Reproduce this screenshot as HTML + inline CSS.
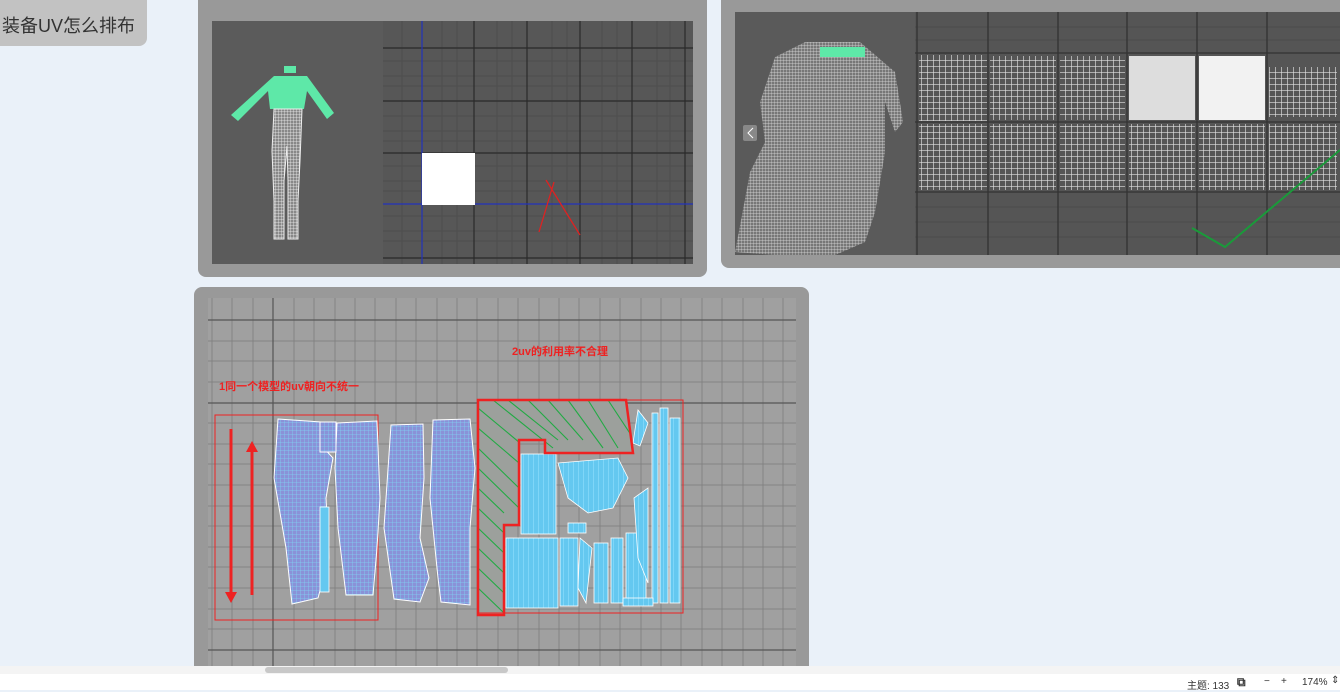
<!DOCTYPE html>
<html><head><meta charset="utf-8"><style>
*{margin:0;padding:0;box-sizing:border-box}
body{width:1340px;height:690px;overflow:hidden;background:#eaf1f9;position:relative;font-family:"Liberation Sans","Noto Sans CJK SC",sans-serif}
.abs{position:absolute}
</style></head><body>
<div class="abs" style="left:-10px;top:-10px;width:157px;height:56px;background:#c2c2c2;border-radius:8px;"></div>
<div class="abs" style="left:2px;top:12px;font-size:18px;color:#333">装备UV怎么排布</div>

<!-- panel 1 -->
<div class="abs" style="left:198px;top:-10px;width:509px;height:287px;background:#999;border-radius:8px"></div>
<svg class="abs" style="left:212px;top:21px" width="481" height="243">
<defs><pattern id="wf" width="3" height="3" patternUnits="userSpaceOnUse"><rect width="3" height="3" fill="#888"/><path d="M0 0H3M0 0V3" stroke="#eee" stroke-width="0.8"/></pattern></defs>
<rect width="481" height="243" fill="#5b5b5b"/>
<rect x="171" width="310" height="243" fill="#575757"/>
<g stroke="#4e4e4e" stroke-width="1">
<path d="M171 40H481M171 55H481M171 65H481M171 95H481M171 110H481M171 120H481M171 145H481M171 160H481M171 170H481M171 195H481M171 210H481M171 220H481M190 0V243M230 0V243M245 0V243M285 0V243M300 0V243M340 0V243M355 0V243M390 0V243M405 0V243M445 0V243M458 0V243"/>
</g>
<g stroke="#2a2a2a" stroke-width="1.2">
<path d="M171 27H481M171 80H481M171 132H481M171 237H481M262 0V243M315 0V243M368 0V243M420 0V243M473 0V243"/>
</g>
<path d="M210 0V243M171 183H481" stroke="#2233bb" stroke-width="1.2"/>
<rect x="210" y="132" width="53" height="52" fill="#fff"/>
<path d="M334 159L368 214M342 161L327 211" stroke="#d22" stroke-width="1.3"/>
<rect x="72" y="45" width="12" height="7" fill="#5ee8a8"/>
<path d="M62 55L95 55L122 92L115 98L95 70L92 88L58 88L56 70L26 100L19 94Z" fill="#5ee8a8"/>
<path d="M62 88H90L88 140L86 180L86 218H76L76 160L75 125L72 160L72 218H62L62 180L60 130Z" fill="url(#wf)" stroke="#eee" stroke-width="1"/>
</svg>

<!-- panel 2 -->
<div class="abs" style="left:721px;top:-10px;width:630px;height:278px;background:#999;border-radius:8px"></div>
<svg class="abs" style="left:735px;top:12px" width="605" height="243">
<defs>
<pattern id="wf2" width="3" height="3" patternUnits="userSpaceOnUse"><rect width="3" height="3" fill="#777"/><path d="M0 0H3M0 0V3" stroke="#ddd" stroke-width="0.7"/></pattern>
<pattern id="tl" width="6" height="6" patternUnits="userSpaceOnUse"><rect width="6" height="6" fill="#555"/><path d="M0 0H6M0 0V6" stroke="#e8e8e8" stroke-width="1.3"/></pattern>
</defs>
<rect width="605" height="243" fill="#5a5a5a"/>
<rect x="180" width="425" height="243" fill="#555"/>
<g stroke="#4a4a4a"><path d="M180 15H605M180 28H605M180 195H605M180 210H605M180 225H605"/></g>
<g stroke="#333" stroke-width="1.3"><path d="M180 41H605M180 110H605M180 180H605M182 0V243M253 0V243M323 0V243M392 0V243M462 0V243M532 0V243"/></g>
<path d="M40 45L70 30L125 30L160 60L168 110L160 120L150 90L150 140L140 200L130 230L100 243L40 243L0 240L15 160L30 130L25 90Z" fill="url(#wf2)"/>
<rect x="85" y="35" width="45" height="10" fill="#5ee8a8"/>
<rect x="8" y="113" width="14" height="16" rx="2" fill="#888"/>
<path d="M18 116L13 121L18 126" stroke="#fff" fill="none"/>
<g fill="url(#tl)" opacity="0.95">
<rect x="184" y="43" width="68" height="66"/><rect x="184" y="112" width="68" height="66"/><rect x="255" y="44" width="66" height="64"/><rect x="325" y="44" width="65" height="64"/><rect x="255" y="112" width="66" height="66"/><rect x="325" y="112" width="65" height="66"/><rect x="394" y="112" width="66" height="66"/><rect x="464" y="112" width="66" height="66"/><rect x="534" y="112" width="68" height="66"/><rect x="534" y="55" width="68" height="50"/>
</g>
<rect x="394" y="44" width="66" height="64" fill="#ddd"/>
<rect x="464" y="44" width="66" height="64" fill="#f2f2f2"/>
<path d="M457 216L490 235L605 138" stroke="#1a9a3a" stroke-width="2" fill="none"/>
</svg>

<!-- panel 3 -->
<div class="abs" style="left:194px;top:287px;width:615px;height:400px;background:#999;border-radius:8px"></div>
<svg class="abs" style="left:208px;top:298px" width="588" height="368">
<defs>
<pattern id="uv" width="4" height="4" patternUnits="userSpaceOnUse"><rect width="4" height="4" fill="#8a92d8"/><path d="M0 0H4M0 0V4" stroke="#7fd3f2" stroke-width="0.8"/></pattern>
<pattern id="cy" width="5" height="5" patternUnits="userSpaceOnUse"><rect width="5" height="5" fill="#64c8f0"/><path d="M0 0V5" stroke="#9ae4ff" stroke-width="1"/></pattern>
<clipPath id="gc"><path d="M270 102L418 102L425 155L337 155L337 142L311 142L311 227L296 227L296 317L270 317Z"/></clipPath>
</defs>
<rect width="588" height="368" fill="#a0a0a0"/>
<g stroke="#838383"><path d="M0 43H588M0 63H588M0 84H588M0 125H588M0 146H588M0 166H588M0 187H588M0 208H588M0 228H588M0 249H588M0 269H588M0 290H588M0 311H588M0 331H588M4 0V368M24 0V368M45 0V368M86 0V368M106 0V368M127 0V368M147 0V368M167 0V368M188 0V368M208 0V368M229 0V368M249 0V368M269 0V368M290 0V368M310 0V368M331 0V368M351 0V368M371 0V368M392 0V368M412 0V368M433 0V368M453 0V368M473 0V368M494 0V368M514 0V368M535 0V368M555 0V368M575 0V368"/></g>
<path d="M0 22H588M0 105H588M0 352H588M65 0V368" stroke="#555" stroke-width="1.2"/>
<rect x="7" y="117" width="163" height="205" fill="none" stroke="#e22"/>
<path d="M23 131V297M44 152V297" stroke="#e22" stroke-width="3"/>
<path d="M17 294L23 305L29 294ZM38 154L44 143L50 154Z" fill="#e22"/>
<g fill="url(#uv)" stroke="#fff"><path d="M70 121L113 124L112 146L125 160L118 200L121 260L110 300L84 306L78 250L66 180Z"/><path d="M129 125L169 123L172 200L169 250L165 297L138 297L130 230L127 170Z"/><path d="M183 127L215 126L216 180L212 240L221 280L212 304L186 301L176 230Z"/><path d="M225 122L262 121L267 170L262 230L262 307L233 304L230 280L222 200Z"/><rect x="112" y="124" width="16" height="30"/></g>
<rect x="112" y="209" width="9" height="85" fill="#64c8f0" stroke="#fff" stroke-width="0.8"/>
<g clip-path="url(#gc)"><rect x="270" y="102" width="160" height="215" fill="#9ca09c"/><g stroke="#22aa44" stroke-width="1.1"><path d="M270 110L330 160M270 130L311 165M270 150L311 190M270 170L311 210M270 190L296 215M270 210L296 235M270 230L296 255M270 250L296 275M270 270L296 295M270 290L296 315M285 102L345 150M300 102L350 142M320 102L360 142M340 102L375 142M360 102L395 150M380 102L410 150M400 102L425 140"/></g></g>
<g fill="url(#cy)" stroke="#fff" stroke-width="0.8">
<rect x="313" y="156" width="35" height="80"/><rect x="298" y="240" width="52" height="70"/><rect x="352" y="240" width="18" height="68"/>
<path d="M372 240L384 250L378 305L370 290Z"/><rect x="386" y="245" width="14" height="60"/><rect x="403" y="240" width="12" height="65"/><rect x="418" y="235" width="20" height="70"/>
<rect x="444" y="115" width="6" height="190"/><rect x="452" y="110" width="8" height="195"/><rect x="462" y="120" width="10" height="185"/>
<path d="M350 165L410 160L420 180L405 210L380 215L360 200Z"/><path d="M430 112L440 125L432 148L425 145Z"/><path d="M426 200L440 190L440 285L430 260Z"/><rect x="360" y="225" width="18" height="10"/><rect x="415" y="300" width="30" height="8"/>
</g>
<path d="M270 102L418 102L425 155L337 155L337 142L311 142L311 227L296 227L296 317L270 317Z" fill="none" stroke="#e22" stroke-width="2.5"/>
<rect x="270" y="102" width="205" height="213" fill="none" stroke="#e22"/>
<text x="11" y="92" fill="#e22" font-size="11" font-weight="bold">1同一个模型的uv朝向不统一</text>
<text x="304" y="57" fill="#e22" font-size="11" font-weight="bold">2uv的利用率不合理</text>
</svg>

<!-- bottom bars -->
<div class="abs" style="left:0;top:666px;width:1340px;height:8px;background:#f4f4f4"></div>
<div class="abs" style="left:265px;top:667px;width:243px;height:6px;background:#c8c8c8;border-radius:3px"></div>
<div class="abs" style="left:0;top:674px;width:1340px;height:16px;background:#fff;font-size:10px;color:#333">
<span class="abs" style="left:1187px;top:3px">主题: 133</span>
<span class="abs" style="left:1237px;top:1px;font-size:12px;font-weight:bold">⧉</span>
<span class="abs" style="left:1264px;top:2px">−</span>
<span class="abs" style="left:1281px;top:2px">+</span>
<span class="abs" style="left:1302px;top:3px">174%</span>
<span class="abs" style="left:1331px;top:1px">⇕</span>
</div>
</body></html>
